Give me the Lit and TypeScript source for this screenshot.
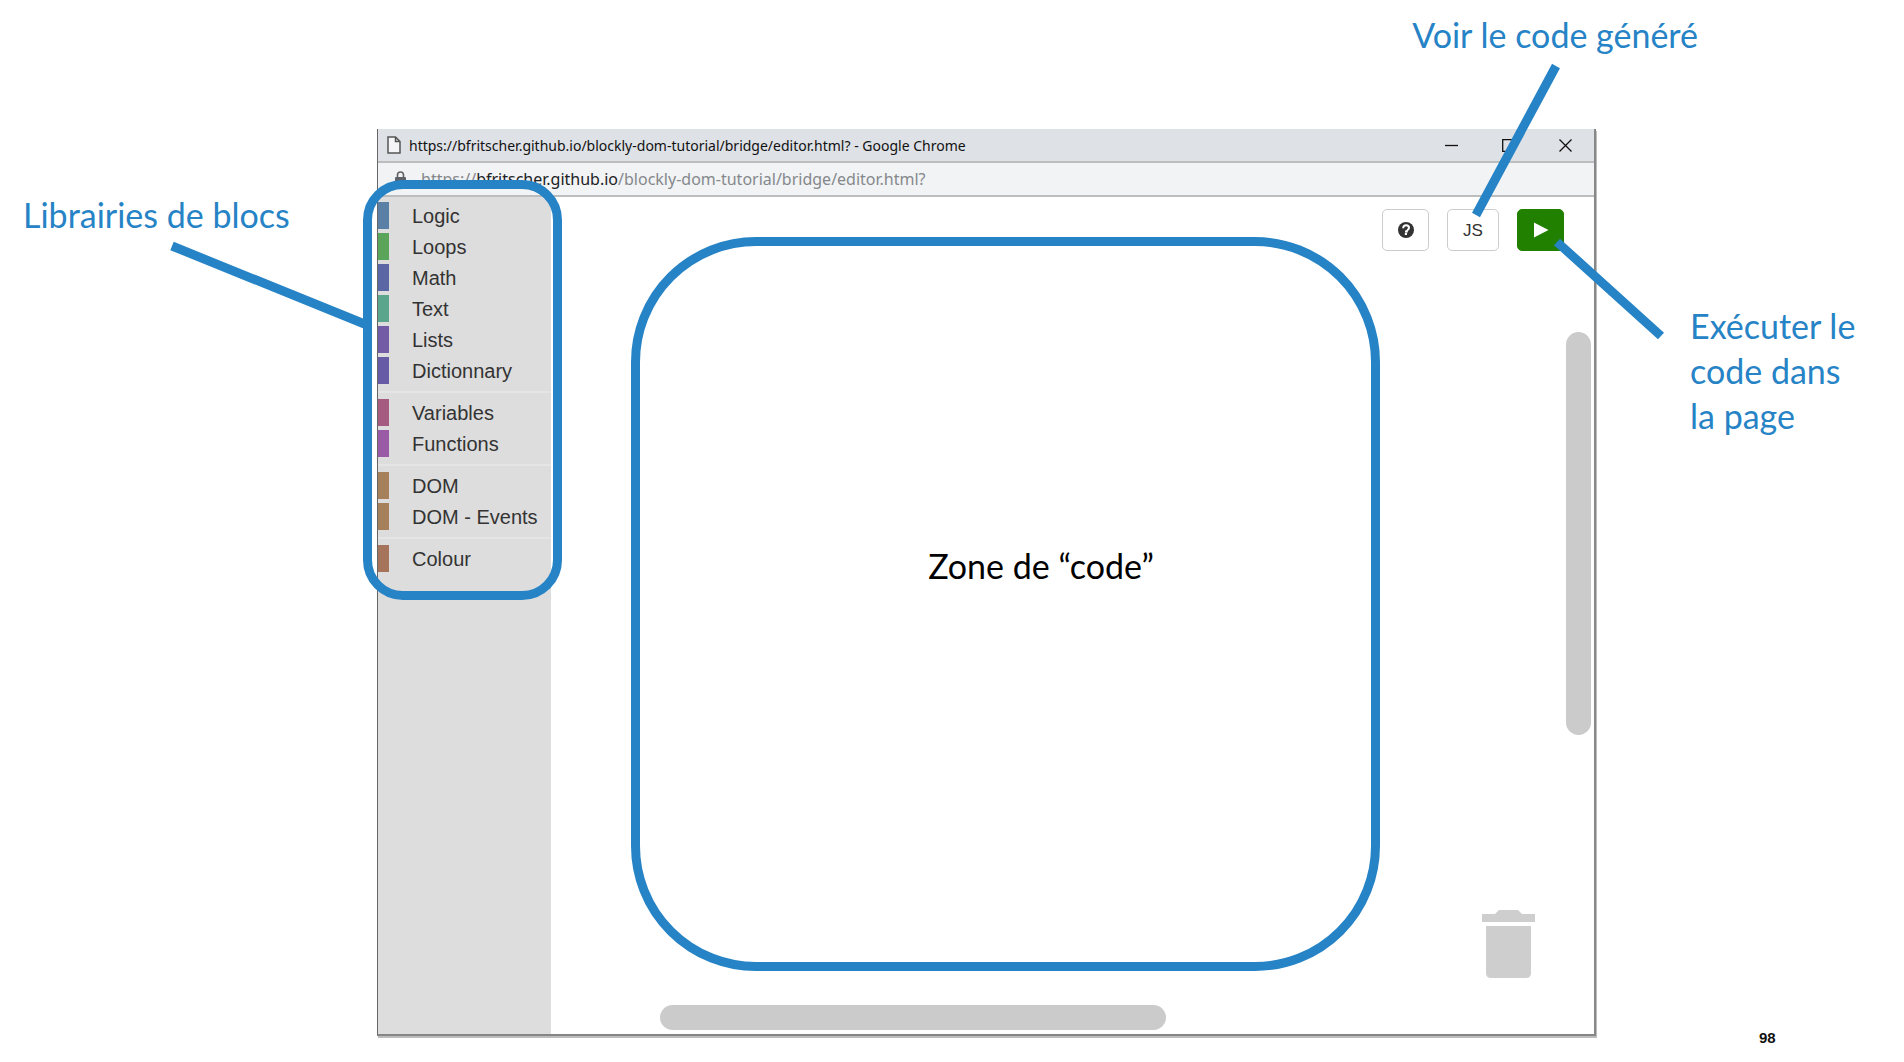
import { LitElement, html, css, svg } from "lit";
import { customElement } from "lit/decorators.js";
import { styleMap } from "lit/directives/style-map.js";

interface Category {
  name: string;
  colour: string;
}

const groups: Category[][] = [
  [
    { name: "Logic", colour: "#5b80a5" },
    { name: "Loops", colour: "#5ba55b" },
    { name: "Math", colour: "#5b67a5" },
    { name: "Text", colour: "#5ba58c" },
    { name: "Lists", colour: "#745ba5" },
    { name: "Dictionnary", colour: "#675ba5" },
  ],
  [
    { name: "Variables", colour: "#a55b80" },
    { name: "Functions", colour: "#995ba5" },
  ],
  [
    { name: "DOM", colour: "#a5805b" },
    { name: "DOM - Events", colour: "#a5805b" },
  ],
  [{ name: "Colour", colour: "#a5745b" }],
];

@customElement("block-toolbox")
export class BlockToolbox extends LitElement {
  static styles = css`
    :host {
      display: block;
      background: #ddd;
      font-family: "Liberation Sans", Arial, sans-serif;
    }
    .nav {
      position: relative;
      padding: 5px 0 20px;
    }
    .group {
      list-style: none;
      margin: 0;
      padding: 0;
      display: flex;
      flex-direction: column;
      gap: 4px;
    }
    .group + .group {
      margin-top: 7px;
      padding-top: 6px;
      border-top: 2px solid #e5e5e5;
    }
    .item {
      display: flex;
      align-items: flex-end;
      gap: 23px;
      width: 100%;
      height: 27px;
      padding: 0;
      border: 0;
      background: none;
      color: #333;
      font: inherit;
      font-size: 20px;
      line-height: 25px;
      text-align: left;
      white-space: nowrap;
    }
    .swatch {
      width: 11px;
      height: 27px;
    }
    .ring {
      position: absolute;
      inset: -17px -11px -8px -15px;
      border: 9px solid #2683c6;
      border-radius: 40px;
      pointer-events: none;
      z-index: 1;
    }
  `;

  render() {
    return html`
      <nav class="nav" aria-label="Librairies de blocs">
        ${groups.map(
          (group) => html`<ul class="group">
            ${group.map(
              (c) => html`<li>
                <button class="item">
                  <span class="swatch" style=${styleMap({ background: c.colour })}></span>${c.name}
                </button>
              </li>`
            )}
          </ul>`
        )}
        <div class="ring"></div>
      </nav>
    `;
  }
}

@customElement("block-workspace")
export class BlockWorkspace extends LitElement {
  static styles = css`
    :host {
      display: grid;
      grid-template-columns: 1fr 186px 28px;
      grid-template-rows: 1fr 63px;
      background: #fff;
      font-family: "Liberation Sans", Arial, sans-serif;
    }
    .zone {
      margin: 40px 0 0 80px;
      border: 9px solid #2683c6;
      border-radius: 125px;
      display: flex;
      justify-content: center;
      padding: 297px 0 0 71px;
      font-family: Lato, sans-serif;
      font-size: 34px;
      line-height: 45px;
      color: #000;
    }
    .tools {
      grid-row: 1 / 3;
      grid-column: 2;
      display: flex;
      flex-direction: column;
      justify-content: space-between;
      align-items: flex-start;
      padding: 12px 0 56px 2px;
    }
    .buttons {
      display: flex;
      gap: 18px;
    }
    .btn {
      display: flex;
      align-items: center;
      justify-content: center;
      box-sizing: border-box;
      width: 47px;
      height: 42px;
      padding: 0;
      border: 1px solid #ccc;
      border-radius: 5px;
      background: #fff;
      color: #333;
      font: inherit;
      font-size: 17px;
    }
    .js {
      width: 52px;
    }
    .run {
      background: #218000;
      border-color: #218000;
    }
    .trash {
      display: block;
      margin-left: 100px;
    }
    .vertical {
      grid-row: 1 / 3;
      grid-column: 3;
      display: grid;
      grid-template-rows: 135fr 403fr 299fr;
      padding-right: 3px;
    }
    .horizontal {
      grid-column: 1;
      grid-row: 2;
      display: grid;
      grid-template-columns: 109fr 506fr 214fr;
      padding: 34px 0 4px;
    }
    .thumb {
      background: #cbcbcb;
      border-radius: 13px;
    }
    .vertical .thumb {
      grid-area: 2 / 1;
    }
    .horizontal .thumb {
      grid-area: 1 / 2;
    }
  `;

  render() {
    return html`
      <div class="zone">Zone de “code”</div>
      <div class="tools">
        <div class="buttons">
          <button class="btn" aria-label="Aide">
            <svg width="16" height="16" viewBox="0 0 16 16">
              <circle cx="8" cy="8" r="8" fill="#333" />
              <path d="M5.2 6.2C5.2 4.3 6.3 3.3 8.1 3.3C9.8 3.3 11 4.3 11 5.8C11 7.8 8.8 7.7 8.8 9.5H7" fill="none" stroke="#fff" stroke-width="2" />
              <rect x="6.8" y="10.8" width="2.2" height="2.2" fill="#fff" />
            </svg>
          </button>
          <button class="btn js">JS</button>
          <button class="btn run" aria-label="Exécuter">
            <svg width="16" height="16" viewBox="0 0 16 16">
              <path d="M1 .5L15.5 8L1 15.5Z" fill="#fff" />
            </svg>
          </button>
        </div>
        <svg class="trash" width="53" height="68" viewBox="0 0 53 68" fill="#cecece">
          <path d="M0 4H13L17 0H36L40 4H53V12H0Z" />
          <path d="M4 16H49V63Q49 68 44 68H9Q4 68 4 63Z" />
        </svg>
      </div>
      <div class="vertical"><div class="thumb"></div></div>
      <div class="horizontal"><div class="thumb"></div></div>
    `;
  }
}

@customElement("browser-window")
export class BrowserWindow extends LitElement {
  static styles = css`
    :host {
      display: flex;
      flex-direction: column;
      box-sizing: border-box;
      border-left: 1px solid #666;
      border-right: 2px solid #888;
      border-bottom: 2px solid #868686;
      box-shadow: 1px 2px 0 #bdbdbd;
      font-family: "Noto Sans", "Open Sans", sans-serif;
    }
    .title {
      display: flex;
      align-items: center;
      height: 32px;
      padding-left: 9px;
      background: #dee1e6;
      border-bottom: 2px solid #bbbdbf;
      color: #111;
      font-size: 14px;
      white-space: nowrap;
    }
    .caption {
      flex: 1;
      margin-left: 8px;
    }
    .control {
      display: flex;
      align-items: center;
      justify-content: center;
      width: 57px;
      height: 32px;
      padding: 0;
      border: 0;
      background: none;
    }
    .address {
      display: flex;
      align-items: center;
      gap: 15px;
      height: 32px;
      padding-left: 17px;
      background: #f1f3f4;
      border-bottom: 2px solid #bbbdbf;
      color: #85888c;
      font-size: 16px;
      white-space: nowrap;
    }
    .host {
      color: #202124;
    }
    .body {
      flex: 1;
      display: grid;
      grid-template-columns: 173px 1fr;
    }
  `;

  private control(label: string, d: string) {
    return html`<button class="control" aria-label=${label}>
      <svg width="13" height="13" viewBox="0 0 13 13" fill="none" stroke="#111" stroke-width="1.3">
        ${svg`<path d=${d} />`}
      </svg>
    </button>`;
  }

  render() {
    return html`
      <div class="title">
        <svg width="14" height="18" viewBox="0 0 14 18" fill="#f4f5f6" stroke="#555" stroke-width="1.5">
          <path d="M1 1H8.5L13 5.5V17H1ZM8.5 1V5.5H13" />
        </svg>
        <span class="caption">https://bfritscher.github.io/blockly-dom-tutorial/bridge/editor.html? - Google Chrome</span>
        ${this.control("Réduire", "M0 6.5H13")}
        ${this.control("Agrandir", "M.7 .7H12.3V12.3H.7Z")}
        ${this.control("Fermer", "M.5 .5L12.5 12.5M12.5 .5L.5 12.5")}
      </div>
      <div class="address">
        <svg width="11" height="16" viewBox="0 0 11 16">
          <path d="M2.5 7V4A3 3 0 0 1 8.5 4V7" fill="none" stroke="#5f6368" stroke-width="1.6" />
          <rect y="6" width="11" height="9" rx="1" fill="#5f6368" />
        </svg>
        <span>https://<span class="host">bfritscher.github.io</span>/blockly-dom-tutorial/bridge/editor.html?</span>
      </div>
      <div class="body">
        <block-toolbox></block-toolbox>
        <block-workspace></block-workspace>
      </div>
    `;
  }
}

@customElement("app-root")
export class AppRoot extends LitElement {
  static styles = css`
    :host {
      display: grid;
      position: relative;
      grid-template-columns: 377fr 1219fr 308fr;
      grid-template-rows: 129px 1fr 26px;
      min-height: 100vh;
      overflow: hidden;
      background: #fff;
      color: #2683c6;
      font-family: Lato, sans-serif;
      font-size: 34px;
      line-height: 45px;
    }
    .top {
      grid-area: 1 / 2 / 2 / 4;
      justify-self: end;
      padding: 12px 206px 0 0;
    }
    .left {
      grid-area: 2 / 1;
      padding: 63px 0 0 23px;
    }
    .window {
      grid-area: 2 / 2;
    }
    .right {
      grid-area: 2 / 3;
      padding: 174px 44px 0 94px;
      white-space: nowrap;
    }
    .page {
      grid-area: 2 / 3 / 4 / 4;
      align-self: end;
      padding: 0 0 14px 163px;
      color: #111;
      font-family: "Liberation Sans Narrow", "Liberation Sans", sans-serif;
      font-size: 15px;
      font-weight: 700;
      line-height: 20px;
    }
    .pointers {
      position: absolute;
      inset: 0;
      width: 100%;
      height: 100%;
      pointer-events: none;
    }
  `;

  render() {
    return html`
      <div class="top">Voir le code généré</div>
      <div class="left">Librairies de blocs</div>
      <browser-window class="window"></browser-window>
      <div class="right">Exécuter le<br />code dans<br />la page</div>
      <div class="page">98</div>
      <svg class="pointers" viewBox="0 0 1904 1062" preserveAspectRatio="none" stroke="#2683c6" stroke-width="9">
        <path d="M172 246L367 325M1556 66L1476 215M1557 242L1661 336" fill="none" />
      </svg>
    `;
  }
}
